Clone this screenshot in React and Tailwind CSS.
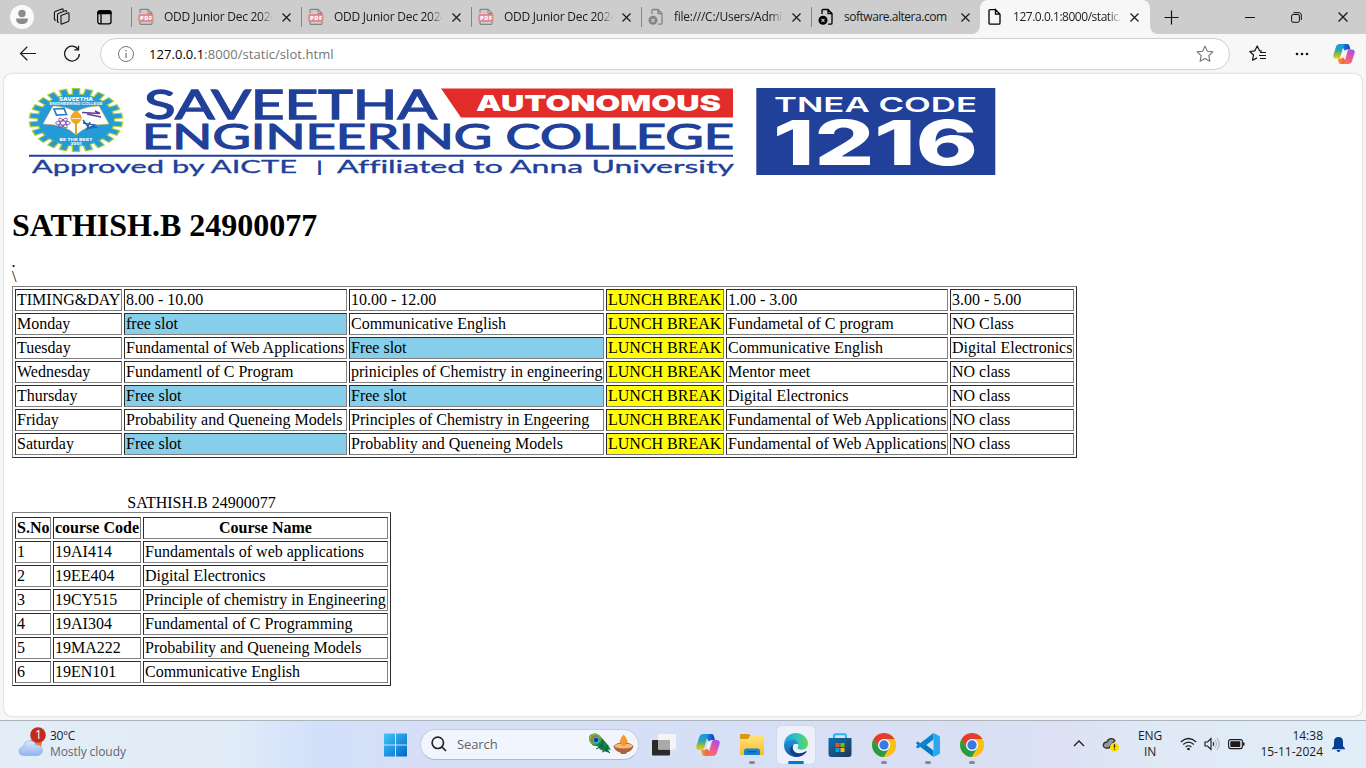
import React from "react";

const UI = "font-['Open_Sans','Noto_Sans',sans-serif]";

function PdfIcon() {
  return (
    <svg width="16" height="18" viewBox="0 0 16 18" fill="none">
      <path d="M2 5V2.200c0-.5.3-.8.8-.8H10l4 4V15.600c0 .5-.3.8-.8.8H2.800c-.5 0-.8-.3-.8-.8V14" stroke="#858585" strokeWidth="1.200" />
      <path d="M10 1.500V5.500H14" stroke="#858585" />
      <rect x="0.300" y="6" width="15.200" height="8" rx="1" fill="#e58b8b" />
      <text x="2" y="12.100" fontSize="5.800" fontWeight="800" fill="#fff" textLength="12" fontFamily="Open Sans">PDF</text>
    </svg>
  );
}

function PageIcon({ color = "#000", error = false }) {
  return (
    <svg width="16" height="18" viewBox="0 0 16 18" fill="none" stroke={color} strokeWidth="1.300">
      {error ? (
        <>
          <path d="M4 6V2.700c0-.8.4-1.200 1.200-1.200H10l4 4V15c0 .8-.4 1.200-1.200 1.200H10M10 1.500V5.500H14" />
          <circle cx="5" cy="12.300" r="4.500" fill={color} stroke="none" />
          <path d="m3.500 10.800 3 3m0-3-3 3" stroke="#cdcdcd" strokeWidth="1.100" />
        </>
      ) : (
        <path d="M8.500 1.600H3.200c-.8 0-1.200.4-1.200 1.200V15c0 .8.4 1.200 1.200 1.200h8.600c.8 0 1.200-.4 1.200-1.200V6.200L8.500 1.600V6.200H13" />
      )}
    </svg>
  );
}

function Cross({ size = 9 }) {
  return (
    <svg width={size} height={size} viewBox="0 0 9 9" stroke="#1b1b1b" strokeWidth="1.200" className="shrink-0">
      <path d="m.5.5 8 8m0-8-8 8" />
    </svg>
  );
}

function Tab({ icon, title, active, last, tight, fade = true }) {
  return (
    <div
      className={
        "relative flex h-[34px] shrink-0 items-center " +
        (last ? "w-[169px] " : "w-[170px] ") +
        (active ? "rounded-t-lg bg-[#f7f7f7]" : "")
      }
    >
      {!active && <div className="h-5 w-px bg-[#858585]" />}
      <div className={"flex w-4 shrink-0 " + (active ? "ml-[7px]" : "ml-[6px]")}>{icon}</div>
      <div
        className={
          "ml-[10px] overflow-hidden whitespace-nowrap text-[12px] leading-[18px] text-[#1b1b1b] " +
          (active || last ? "w-[108px] " : "w-[109px] ") +
          (tight ? "tracking-[-0.47px] " : "tracking-[-0.26px] ") +
          (fade ? "[mask-image:linear-gradient(to_right,black_88%,transparent)]" : "")
        }
      >
        {title}
      </div>
      <div className="ml-[9px] flex"><Cross /></div>
      {active && (
        <>
          <svg className="absolute bottom-0 -left-2" width="8" height="8"><path d="M8 0V8H0A8 8 0 0 0 8 0" fill="#f7f7f7" /></svg>
          <svg className="absolute -right-2 bottom-0" width="8" height="8"><path d="M0 0V8H8A8 8 0 0 1 0 0" fill="#f7f7f7" /></svg>
        </>
      )}
    </div>
  );
}

function Copilot({ size = 24 }) {
  return (
    <svg width={size} height={size} viewBox="0 0 24 24">
      <defs>
        <linearGradient id="cpA" x1="0" y1="0" x2="0" y2="1"><stop stopColor="#1595ee" /><stop offset=".45" stopColor="#2da9a4" /><stop offset=".75" stopColor="#a7bf35" /><stop offset="1" stopColor="#ffc51b" /></linearGradient>
        <linearGradient id="cpB" x1=".8" y1="0" x2=".2" y2="1"><stop stopColor="#a052f0" /><stop offset=".5" stopColor="#e855a0" /><stop offset="1" stopColor="#ff7547" /></linearGradient>
        <linearGradient id="cpC" x1="0" y1="0" x2="1" y2="0"><stop stopColor="#1697ed" /><stop offset="1" stopColor="#163cc2" /></linearGradient>
        <linearGradient id="cpD" x1="0" y1="0" x2="1" y2="0"><stop stopColor="#f5a330" /><stop offset="1" stopColor="#ed3c52" /></linearGradient>
      </defs>
      <path d="M8 1h7.500c1.300 0 2 .8 2.400 2L19 7h-3c-1.500 0-2.300.6-2.700 2z" fill="url(#cpC)" />
      <path d="M16 23H8.500c-1.300 0-2-.8-2.400-2L5 17h3c1.500 0 2.300-.6 2.700-2z" fill="url(#cpD)" />
      <path d="M7.500 1h5.700c-1 .7-1.500 1.500-1.900 2.900L8.200 15c-.4 1.500-1.300 2-2.700 2H3.200C.7 17-.2 15 .5 12.700L3.300 4C4 2 5.300 1 7.500 1Z" fill="url(#cpA)" />
      <path d="M16.500 23h-5.700c1-.7 1.500-1.500 1.900-2.900L15.800 9c.4-1.500 1.300-2 2.700-2h2.300c2.500 0 3.400 2 2.700 4.300L20.700 20c-.7 2-2 3-4.200 3Z" fill="url(#cpB)" />
      <path d="M12.600 8.300h2.800l-2.600 7.400h-3Z" fill="#f1f3fa" />
    </svg>
  );
}

function Chrome() {
  return (
    <svg width="24" height="24" viewBox="0 0 24 24">
      <circle cx="12" cy="12" r="12" fill="#fbc116" />
      <path d="M1.610 6A12 12 0 0 1 22.390 6L12 6.600 6.800 15Z" fill="#e33b2e" />
      <path d="M1.610 6A12 12 0 0 0 12 24L17.200 15 6.800 15Z" fill="#269b48" />
      <path d="M22.390 6A12 12 0 0 1 12 24L17.200 15 12 6Z" fill="#fbc116" />
      <circle cx="12" cy="12" r="6" fill="#fff" />
      <circle cx="12" cy="12" r="4.700" fill="#3b78e7" />
    </svg>
  );
}

function Edge() {
  return (
    <svg width="24" height="24" viewBox="0 0 24 24">
      <defs>
        <linearGradient id="edA" x1="0" y1=".3" x2="1" y2=".3"><stop stopColor="#269fdf" /><stop offset=".5" stopColor="#2bc4c5" /><stop offset="1" stopColor="#64d94f" /></linearGradient>
        <linearGradient id="edB" x1="0" y1="0" x2="0" y2="1"><stop stopColor="#2294dd" /><stop offset="1" stopColor="#0c59a4" /></linearGradient>
      </defs>
      <path d="M0 11C.6 4.400 5.800 0 12 0c6.800 0 12 5.200 12 10.500 0 3.800-3 6.200-6.400 6.200-2.600 0-4.200-.9-4.200-2 0-.8 1-1.200 1-3C14.400 9 12 7 8.800 7 4.900 7 1.500 8.700 0 11Z" fill="url(#edA)" />
      <path d="M0 12.500C0 8.800 4 6.400 8.500 6.500c3.700 0 6 2.300 5.900 5.200-3-2.300-6.300.2-6.100 3.800.2 4.200 4.800 7.200 10.700 6.200A12 12 0 0 1 0 12.500Z" fill="url(#edB)" />
      <path d="M9.200 12c-1.800 4.500 1.400 8.300 6 8.300 2.400 0 4.600-.8 6.600-2 .8-.4 1.200.1.700.8A12 12 0 0 1 15 23.600C9.500 24 6 20.700 6 17c0-2.200 1.200-4 3.200-5Z" fill="#123f87" />
    </svg>
  );
}

function Crest() {
  const teeth = Array.from({ length: 22 }, (_, i) => (i * 360) / 22);
  return (
    <g>
      <g transform="translate(76 46) scale(1.480 1)">
        <g fill="#229bd8" stroke="#a9cb39" strokeWidth="1">
          <circle r="26" />
          {teeth.map((a) => (
            <rect key={a} x="-2.400" y="-31.400" width="4.800" height="7" transform={`rotate(${a})`} />
          ))}
        </g>
        <circle r="25.600" fill="#229bd8" />
      </g>
      <path d="M53 32q13 0 23 6 10-6 23-6l10 18q-22 0-33 11-11-11-33-11Z" fill="#fff" stroke="#e2b54e" strokeWidth=".6" />
      <path d="M76 37V61" stroke="#dea22a" strokeWidth="2" />
      <path d="M76 36c7.500 6 7.500 10 0 15-7.500-5-7.500-9 0-15Z" fill="#f4a51c" />
      <path d="M71.500 44.500h9" stroke="#fff" strokeWidth=".8" />
      <path d="m54 35 10-.5 2.500 6-10 .5Z" fill="#fff" stroke="#267fc4" strokeWidth="1.700" />
      <g fill="none" stroke="#7b4ba5" strokeWidth=".9"><ellipse cx="63" cy="49" rx="7.500" ry="2" /><ellipse cx="63" cy="49" rx="6" ry="2.300" transform="rotate(50 63 49)" /><ellipse cx="63" cy="49" rx="6" ry="2.300" transform="rotate(130 63 49)" /></g>
      <path d="M82 38.500 100 39.500 95 37m-8 3 14 3" stroke="#663d99" strokeWidth="1.600" fill="none" />
      <path d="m83 46 6 8 8-1m-14-4 12 2-8 4 3-7" stroke="#2366b1" strokeWidth="1.500" fill="none" />
      <g fill="#fff" fontFamily="Inter" fontWeight="800" textAnchor="middle">
        <text x="76" y="26.700" fontSize="5" textLength="34" lengthAdjust="spacingAndGlyphs">SAVEETHA</text>
        <text x="76" y="31" fontSize="4" fontWeight="600" textLength="53" lengthAdjust="spacingAndGlyphs">ENGINEERING COLLEGE</text>
        <text x="76" y="67" fontSize="3.700" textLength="33" lengthAdjust="spacingAndGlyphs">BE THE BEST</text>
        <text x="76" y="71" fontSize="3.500" textLength="11" lengthAdjust="spacingAndGlyphs">2001</text>
      </g>
    </g>
  );
}

function Banner() {
  const fit = "spacingAndGlyphs";
  return (
    <svg width="1000" height="105" viewBox="0 0 1000 105" className="block">
      <g transform="translate(-4 0)">
        <Crest />
        <g fill="#21409a" fontFamily="Lato" className="[font-variant-ligatures:none]">
          <text x="144" y="44.500" fontSize="41" stroke="#21409a" strokeWidth="1.300" textLength="293" lengthAdjust={fit}>SAVEETHA</text>
          <text x="142" y="75.200" fontSize="34" stroke="#21409a" strokeWidth="1.100" textLength="592" lengthAdjust={fit}>ENGINEERING COLLEGE</text>
          <text x="32" y="98.500" fontSize="17" stroke="#21409a" strokeWidth=".3" textLength="265" lengthAdjust={fit}>Approved by AICTE</text>
          <text x="316" y="98" fontSize="16" fontWeight="700" textLength="7" lengthAdjust={fit}>|</text>
          <text x="337" y="98.500" fontSize="17" stroke="#21409a" strokeWidth=".3" textLength="397" lengthAdjust={fit}>Affiliated to Anna University</text>
        </g>
        <path d="M29 81.700H733" stroke="#21409a" strokeWidth="2" />
        <path d="M441 14.500H733V43.500H461Z" fill="#e22c2a" />
        <text x="476" y="37" fill="#fff" fontFamily="Inter" fontSize="22" fontWeight="900" textLength="245" lengthAdjust={fit}>AUTONOMOUS</text>
        <rect x="756.300" y="14" width="239" height="87" fill="#21409a" />
        <text x="774" y="37.700" fill="#fff" fontFamily="Inter" fontSize="20.500" fontWeight="600" textLength="203" lengthAdjust={fit}>TNEA CODE</text>
        <text x="773" y="91" fill="#fff" fontFamily="Inter" fontSize="62" fontWeight="800" textLength="205" lengthAdjust={fit}>1216</text>
      </g>
    </svg>
  );
}

const lunch = "LUNCH BREAK";
const schedule = [
  ["TIMING&DAY", "8.00 - 10.00", "10.00 - 12.00", lunch, "1.00 - 3.00", "3.00 - 5.00"],
  ["Monday", "free slot", "Communicative English", lunch, "Fundametal of C program", "NO Class"],
  ["Tuesday", "Fundamental of Web Applications", "Free slot", lunch, "Communicative English", "Digital Electronics"],
  ["Wednesday", "Fundamentl of C Program", "priniciples of Chemistry in engineering", lunch, "Mentor meet", "NO class"],
  ["Thursday", "Free slot", "Free slot", lunch, "Digital Electronics", "NO class"],
  ["Friday", "Probability and Queneing Models", "Principles of Chemistry in Engeering", lunch, "Fundamental of Web Applications", "NO class"],
  ["Saturday", "Free slot", "Probablity and Queneing Models", lunch, "Fundamental of Web Applications", "NO class"],
];
const courses = [
  ["1", "19AI414", "Fundamentals of web applications"],
  ["2", "19EE404", "Digital Electronics"],
  ["3", "19CY515", "Principle of chemistry in Engineering"],
  ["4", "19AI304", "Fundamental of C Programming"],
  ["5", "19MA222", "Probability and Queneing Models"],
  ["6", "19EN101", "Communicative English"],
];

const cellBase = "h-[22px] whitespace-nowrap border border-t-[#2c2c2c] border-l-[#2c2c2c] border-r-[#808080] border-b-[#808080] p-px leading-[18px] ";
const tableBase = "table-fixed border-separate border-spacing-[2px] border border-t-[#808080] border-l-[#808080] border-r-[#2c2c2c] border-b-[#2c2c2c] ";

function cellColor(text) {
  if (text === lunch) return "bg-[#ffff00]";
  if (text.toLowerCase() === "free slot") return "bg-[#87ceeb]";
  return "";
}

function Content() {
  return (
    <main className="mx-1 h-[642px] overflow-hidden rounded-lg bg-white font-['Liberation_Serif',serif] text-[16px] leading-[18px] text-black shadow-[0_0_2px_#b5b5b5]">
      <Banner />
      <div className="px-2">
        <h1 className="mt-[28px] h-[36px] text-[32px] leading-[36px] font-bold">SATHISH.B 24900077</h1>
        <div className="mt-[15px] h-[10px] text-[12px] leading-[10px] font-bold">.</div>
        <div className="h-[18px] leading-[18px]">\</div>
        <table className={tableBase + "w-[1065px]"}>
          <colgroup>
            <col className="w-[107px]" /><col className="w-[223px]" /><col className="w-[255px]" />
            <col className="w-[118px]" /><col className="w-[222px]" /><col className="w-[124px]" />
          </colgroup>
          <tbody>
            {schedule.map((r, i) => (
              <tr key={i}>{r.map((c, j) => <td key={j} className={cellBase + cellColor(c)}>{c}</td>)}</tr>
            ))}
          </tbody>
        </table>
        <div className="h-[36px]" />
        <table className={tableBase + "w-[379px]"}>
          <caption className="h-[18px] leading-[18px]">SATHISH.B 24900077</caption>
          <colgroup><col className="w-[36px]" /><col className="w-[88px]" /><col className="w-[245px]" /></colgroup>
          <thead>
            <tr />
            <tr>{["S.No", "course Code", "Course Name"].map((c) => <th key={c} className={cellBase + "text-center font-bold"}>{c}</th>)}</tr>
          </thead>
          <tbody>
            {courses.map((r) => (
              <tr key={r[0]}>{r.map((c, j) => <td key={j} className={cellBase}>{c}</td>)}</tr>
            ))}
          </tbody>
        </table>
      </div>
    </main>
  );
}

function TabBar() {
  return (
    <div className="flex h-[34px] items-center bg-[#cdcdcd]">
      <div className="flex w-[131px] shrink-0 items-center pl-[10px]">
        <svg width="24" height="24" viewBox="0 0 24 24"><circle cx="12" cy="12" r="12" fill="#fafafa" /><circle cx="12" cy="8.500" r="3.700" fill="#8b8b8b" /><path d="M6.200 13.500h11.600v1.200c0 2.700-2.700 4.300-5.800 4.300s-5.800-1.600-5.800-4.300Z" fill="#8b8b8b" /></svg>
        <svg className="ml-[19px]" width="18" height="18" viewBox="0 0 18 18" fill="none" stroke="#111" strokeWidth="1.100" strokeLinejoin="round">
          <path d="M8 7.400 14.800 4.900q1.200-.4 1.200.7v6.600q0 .9-.8 1.200L9 16q-1 .4-1-.6Z" />
          <path d="M6 14.300 5 14.200q-.5-.1-.5-.8V6.700q0-1 .8-1.300l6.800-2.700 1.400.1v1.500" />
          <path d="M3.200 12.300 2 12q-.6-.1-.6-.8V4.800q0-1 .8-1.300L8.800 1l1.300.1v1.700" />
        </svg>
        <svg className="ml-[26px]" width="15" height="15" viewBox="0 0 15 15" fill="none" stroke="#000" strokeWidth="1.300"><rect x=".8" y="1" width="13.200" height="12.800" rx="2" /><path d="M.8 2.500Q1 1 2.500 1h10q1.500 0 1.500 1.500v1.200H.8Z" fill="#000" /><path d="M4 4V14" /></svg>
      </div>
      <Tab icon={<PdfIcon />} title="ODD Junior Dec 2024" />
      <Tab icon={<PdfIcon />} title="ODD Junior Dec 2024" />
      <Tab icon={<PdfIcon />} title="ODD Junior Dec 2024" />
      <Tab icon={<PageIcon color="#858585" error />} title="file:///C:/Users/Admin" />
      <Tab icon={<PageIcon error />} title="software.altera.com" fade={false} last tight />
      <Tab icon={<PageIcon />} title="127.0.0.1:8000/static/" active tight />
      <svg className="ml-[14px]" width="15" height="15" stroke="#111" strokeWidth="1.200"><path d="M7.500 .5v14M.5 7.500h14" /></svg>
      <div className="ml-auto flex items-center pr-[18px]">
        <svg width="10" height="10" stroke="#111"><path d="M0 5.500H10" /></svg>
        <svg className="ml-[36px]" width="11" height="11" viewBox="0 0 11 11" fill="none" stroke="#111"><rect x=".6" y="2.500" width="7.800" height="7.800" rx="1.500" /><path d="M2.500 .7H8q2.300 0 2.300 2.300v5" /></svg>
        <div className="ml-[36px] flex"><Cross size={10} /></div>
      </div>
    </div>
  );
}

function Toolbar() {
  const star = "m8 1 2.100 4.500 4.900.6-3.600 3.400.9 4.900L8 12l-4.300 2.400.9-4.900L1 6.100l4.900-.6Z";
  return (
    <div className="flex h-[40px] items-center">
      <svg className="ml-[19px]" width="18" height="16" viewBox="0 0 18 16" fill="none" stroke="#1b1b1b" strokeWidth="1.200"><path d="M1.500 7.500H17M8.300.8 1.500 7.500l6.800 6.700" /></svg>
      <svg className="ml-[26px]" width="18" height="18" viewBox="0 0 18 18" fill="none" stroke="#1b1b1b" strokeWidth="1.300"><path d="M14.800 4A7.400 7.400 0 1 0 16.400 9M15.500 .8V4.800H11.300" /></svg>
      <div className="ml-[19px] flex h-8 w-[1130px] items-center rounded-full border border-[#cfcfcf] bg-white pr-[15px] pl-[17px]">
        <svg width="16" height="16" viewBox="0 0 16 16" fill="none" stroke="#757575"><circle cx="8" cy="8" r="7.500" /><path d="M8 7v5M8 4v1.500" strokeWidth="1.200" /></svg>
        <div className="ml-[15px] text-[13px] leading-[18px] tracking-[0.05px] whitespace-nowrap text-[#757575]"><span className="text-black">127.0.0.1</span>:8000/static/slot.html</div>
        <svg className="ml-auto" width="18" height="18" viewBox="0 0 16 16" fill="none" stroke="#777" strokeWidth="1"><path d={star} strokeLinejoin="round" /></svg>
      </div>
      <svg className="ml-[19px]" width="18" height="18" viewBox="0 0 18 18" fill="none" stroke="#111" strokeWidth="1.200" strokeLinejoin="round"><path d="M13 6.200 10.600 5.800 8.200 1 5.900 5.800.8 6.500 4.500 10l-.9 5.200L8 12.900M11 7.500h6M10 10.500h7M11 13.500h6" /></svg>
      <svg className="ml-[28px]" width="14" height="4" fill="#111"><circle cx="2" cy="2" r="1.300" /><circle cx="7" cy="2" r="1.300" /><circle cx="12" cy="2" r="1.300" /></svg>
      <div className="ml-[24px]"><Copilot size={22} /></div>
    </div>
  );
}

function Feather() {
  return (
    <svg width="24" height="22" viewBox="0 0 24 22">
      <path d="M2 2Q8-2 13 4l7 8 3 5-3-.5 2 3.500-5-1.500-5-2-2-3-5-1Q-1 7 2 2Z" fill="#158249" />
      <path d="m5 5 17 15M8 16l6-3m0 6 4-2m-3-10-1 7m6-2-2 6" stroke="#0a633c" strokeWidth="1" />
      <ellipse cx="7" cy="6" rx="6" ry="5.500" fill="#81b844" /><ellipse cx="7.500" cy="6.700" rx="4.800" ry="4.600" fill="#a77a23" /><circle cx="8" cy="7" r="3.500" fill="#20afd0" /><circle cx="8" cy="7" r="2" fill="#173476" />
    </svg>
  );
}

function Diya() {
  return (
    <svg width="21" height="21" viewBox="0 0 22 21">
      <path d="M11 0q6 6 3.500 11-3.500 3-7 0Q5.500 7 11 0Z" fill="#f7972e" />
      <path d="M.5 12Q4 8.500 11 8.500t10.500 3.500q-1 5-7 7l-1 1.500h-5l-1-1.500q-6-2-7-7Z" fill="#ad613c" />
      <ellipse cx="11" cy="12" rx="9.500" ry="2.600" fill="#f0bd72" />
      <path d="M11 3q4 5 2 9h-4q-2-4 2-9Z" fill="#f89a2c" />
    </svg>
  );
}

function TaskIcon({ children, state }) {
  return (
    <div className="flex h-[47px] w-[44px] shrink-0 items-center justify-center">
      <div className={"relative flex size-[38px] items-center justify-center rounded " + (state === "active" ? "bg-[#edf0fa] shadow-[0_0_1px_#aab]" : "")}>
        {children}
        {state === "open" && <span className="absolute bottom-0 h-[3px] w-[6px] rounded bg-[#858895]" />}
        {state === "active" && <span className="absolute bottom-0 h-[3px] w-4 rounded bg-[#0078d4]" />}
      </div>
    </div>
  );
}

function Taskbar() {
  return (
    <footer className="flex h-[48px] items-center border-t border-[#adb3bb] bg-[linear-gradient(90deg,#e3edf7_0%,#e1ecf8_17%,#d3e0fa_23%,#d6dff7_30%,#d5dff6_50%,#dbe0f3_77%,#dfeaf6_85%,#e1edf7_100%)] text-[12px] leading-4 text-[#1b1b1b]">
      <div className="flex w-[383px] items-center pb-[2px] pl-[18px]">
        <svg width="28" height="30" viewBox="0 0 28 30" className="-mt-1">
          <defs><linearGradient id="cl" x1="0" y1="0" x2="0" y2="1"><stop stopColor="#dbe9fd" /><stop offset="1" stopColor="#91b3ee" /></linearGradient></defs>
          <circle cx="18" cy="16" r="6" fill="#f37a2a" />
          <path d="M6 28.500C-1 28.500-.3 20 5.500 20 6 12 17 12 18 18c8-1 8.500 10.500 1 10.500Z" fill="url(#cl)" stroke="#90addc" strokeWidth=".7" />
          <circle cx="20" cy="8" r="7.800" fill="#c42b1c" /><text x="17" y="12.300" fill="#fff" fontSize="12" fontFamily="Open Sans">1</text>
        </svg>
        <div className="ml-1"><div className="tracking-[-0.4px]">30°C</div><div className="text-[#606770] tracking-[-0.08px]">Mostly cloudy</div></div>
      </div>
      <svg width="24" height="24" viewBox="0 0 24 24"><defs><linearGradient id="win" x2="1" y2="1"><stop stopColor="#43c6fb" /><stop offset="1" stopColor="#0067c9" /></linearGradient></defs><path d="M1 .5H12v11H1ZM13 .5h11v11H13ZM1 12.500h11v11H1ZM13 12.500h11v11H13Z" fill="url(#win)" /></svg>
      <div className="-mt-px ml-[13px] flex h-[31px] w-[219px] items-center rounded-full border border-[#c4cee2] border-b-[#aeb9cc] bg-[#f1f5fd] pr-[4px] pl-[10px]">
        <svg width="16" height="16" viewBox="0 0 16 16" fill="none" stroke="#252525" strokeWidth="1.700"><circle cx="6.800" cy="6.800" r="5.700" /><path d="m11 11 4 4" /></svg>
        <span className="ml-[10px] text-[13px] tracking-[-0.1px] text-[#60636a]">Search</span>
        <div className="ml-auto flex items-center gap-px"><Feather /><Diya /></div>
      </div>
      <div className="ml-[3px] flex">
        <TaskIcon><svg width="24" height="24" viewBox="0 0 24 24"><rect x="0" y="7" width="18" height="15.500" rx="1" fill="#292a29" /><rect x="6" y="1" width="18" height="15.500" rx="1" fill="#f4f4f5" /><path d="M6 7H18v9.500H6Z" fill="#aaa" /></svg></TaskIcon>
        <TaskIcon><Copilot /></TaskIcon>
        <TaskIcon state="open"><svg width="24" height="24" viewBox="0 0 24 24"><defs><linearGradient id="fo" x1="0" y1="0" x2="0" y2="1"><stop stopColor="#ffe17a" /><stop offset="1" stopColor="#f7bd2c" /></linearGradient></defs><path d="M0 2q0-1 1-1h7q1 0 1.500.7L11 3v3H0Z" fill="#d89a0c" /><path d="M0 6h8l2-3h13q1 0 1 1v17q0 1-1 1H1q-1 0-1-1Z" fill="url(#fo)" /><path d="M4 22v-4q0-2.500 2.500-2.500h11Q20 15.500 20 18v4Z" fill="#1683d4" /><path d="M7.500 18.700h9" stroke="#07559b" strokeWidth="1.200" /></svg></TaskIcon>
        <TaskIcon state="active"><Edge /></TaskIcon>
        <TaskIcon><svg width="24" height="24" viewBox="0 0 24 24"><defs><linearGradient id="st" x1="0" y1="0" x2="1" y2="1"><stop stopColor="#0871b5" /><stop offset="1" stopColor="#263654" /></linearGradient></defs><path d="M6 7V2.700q0-1.400 1.400-1.400h9.200q1.400 0 1.400 1.400V7" stroke="#28b4ed" strokeWidth="2" fill="none" /><path d="M.5 5h23v16q0 3-3 3h-17q-3 0-3-3Z" fill="url(#st)" /><path d="M7.500 10h4v4h-4Z" fill="#f25022" /><path d="M12.500 10h4v4h-4Z" fill="#7fba00" /><path d="M7.500 15h4v4h-4Z" fill="#00a4ef" /><path d="M12.500 15h4v4h-4Z" fill="#ffb900" /></svg></TaskIcon>
        <TaskIcon state="open"><Chrome /></TaskIcon>
        <TaskIcon state="open"><svg width="24" height="24" viewBox="0 0 24 24"><path d="M17.500 0 5.300 11.300 2 8.500.3 9.400v1.300L17.500 24V17.500L7 9.500Z" fill="#0879bd" /><path d="M17.500 24 5.300 12.700 2 15.500.3 14.600v-1.300L17.500 0V6.500L7 14.500Z" fill="#0a86cf" /><path d="m17.500 0 5.500 2.700q1 .5 1 1.500v15.600q0 1-1 1.500L17.500 24Z" fill="#2aa7ef" /></svg></TaskIcon>
        <TaskIcon state="open"><Chrome /></TaskIcon>
      </div>
      <div className="ml-auto flex items-center pr-[21px] pb-[2px]">
        <svg width="12" height="7" viewBox="0 0 12 7" fill="none" stroke="#1b1b1b" strokeWidth="1.300"><path d="m1 6 5-5 5 5" /></svg>
        <svg className="ml-[17px] mt-px" width="18" height="16" viewBox="0 0 18 16"><path d="M3.500 12C-.5 10.500 1.500 6 5 6 6 2 11 1.500 13 4.500L8 10.500 7 12Z" fill="#999" stroke="#333" strokeWidth="1.300" /><circle cx="12.500" cy="11.200" r="4.500" fill="#ffdf00" /><path d="M12.500 8.300v3.500m0 1v1" stroke="#222" strokeWidth="1.300" /></svg>
        <div className="ml-[17px] w-[26px] text-center tracking-[-0.1px]">ENG<br />IN</div>
        <svg className="mt-px ml-[17px]" width="17" height="14" viewBox="0 0 17 14" fill="none" stroke="#1b1b1b" strokeWidth="1.200"><path d="M.8 5q7.700-7 15.400 0M3.200 7.500q5.300-4.700 10.600 0M5.600 10q2.900-2.500 5.800 0" /><circle cx="8.500" cy="12" r="1.300" fill="#1b1b1b" stroke="none" /></svg>
        <svg className="mt-px ml-[7px]" width="17" height="14" viewBox="0 0 17 14" fill="none" stroke="#1b1b1b" strokeWidth="1.100"><path d="M1 5h2.500L7 1.500v11L3.500 9H1Z" /><path d="M9 5q1.500 2 0 4" /><path d="M11 3q3 4 0 8M13 1q4.500 6 0 12" stroke="#aeb3ba" /></svg>
        <svg className="mt-px ml-[7px]" width="17" height="11" viewBox="0 0 17 11"><rect x=".6" y=".6" width="13.800" height="9" rx="2" fill="none" stroke="#1b1b1b" strokeWidth="1.100" /><rect x="2.300" y="2.300" width="10" height="5.600" rx=".7" fill="#1b1b1b" /><path d="M15.500 3.500v3" stroke="#1b1b1b" strokeWidth="2" /></svg>
        <div className="ml-[15px] w-[63px] text-right whitespace-nowrap">14:38<br />15-11-2024</div>
        <svg className="mt-px ml-[9px]" width="13" height="15" viewBox="0 0 13 15" fill="#053f91"><path d="M6.500 0Q11 0 11 5v4l2 2.500v.7H0v-.7L2 9V5Q2 0 6.500 0ZM4.500 13h4q-.4 2-2 2t-2-2Z" /></svg>
      </div>
    </footer>
  );
}

export default function App() {
  return (
    <div className={"flex h-[768px] w-[1366px] flex-col overflow-hidden bg-[#f7f7f7] " + UI}>
      <TabBar />
      <Toolbar />
      <div className="h-[646px] shrink-0"><Content /></div>
      <Taskbar />
    </div>
  );
}
